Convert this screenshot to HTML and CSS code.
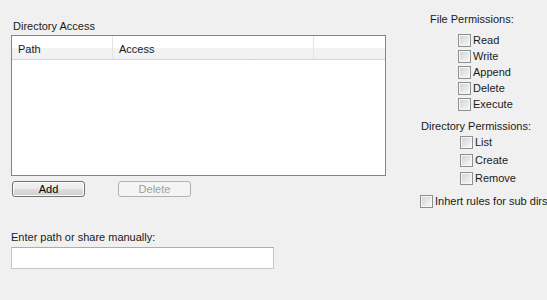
FILE: index.html
```html
<!DOCTYPE html>
<html>
<head>
<meta charset="utf-8">
<link rel="stylesheet" href="styles.css">
</head>
<body>
<div class="page">
  <section class="left">
    <div class="label title">Directory Access</div>
    <div class="list">
      <div class="head">
        <div class="col c1">Path</div>
        <div class="col c2">Access</div>
        <div class="col c3"></div>
      </div>
    </div>
    <div class="buttons">
      <button class="btn">Add</button>
      <button class="btn" disabled>Delete</button>
    </div>
    <div class="label manual">Enter path or share manually:</div>
    <input class="path" type="text">
  </section>
  <section class="right">
    <div class="label fp">File Permissions:</div>
    <div class="group g1">
      <label class="row"><input type="checkbox" class="cb"><span>Read</span></label>
      <label class="row"><input type="checkbox" class="cb"><span>Write</span></label>
      <label class="row"><input type="checkbox" class="cb"><span>Append</span></label>
      <label class="row"><input type="checkbox" class="cb"><span>Delete</span></label>
      <label class="row"><input type="checkbox" class="cb"><span>Execute</span></label>
    </div>
    <div class="label dp">Directory Permissions:</div>
    <div class="group g2">
      <label class="row"><input type="checkbox" class="cb"><span>List</span></label>
      <label class="row"><input type="checkbox" class="cb"><span>Create</span></label>
      <label class="row"><input type="checkbox" class="cb"><span>Remove</span></label>
    </div>
    <label class="row inherit"><input type="checkbox" class="cb"><span>Inhert rules for sub dirs</span></label>
  </section>
</div>
</body>
</html>
```
FILE: styles.css
```css
html, body {
  margin: 0;
  padding: 0;
  background: #f0f0f0;
  width: 547px;
  height: 300px;
  overflow: hidden;
}
body {
  font-family: "Liberation Sans", Arial, sans-serif;
  font-size: 11px;
  color: #1a1a1a;
}
.page {
  display: flex;
  align-items: flex-start;
}
.left {
  width: 375px;
  margin-left: 11px;
  padding-top: 19px;
  display: flex;
  flex-direction: column;
}
.label {
  line-height: 14px;
  height: 14px;
  white-space: nowrap;
}
.title { margin-left: 2px; margin-bottom: 2px; }
.list {
  width: 373px;
  height: 139px;
  border: 1px solid #848484;
  background: #fff;
}
.head {
  display: flex;
  height: 23px;
  border-bottom: 1px solid #d5d5d5;
  background: linear-gradient(#ffffff, #ffffff 50%, #f2f3f5 51%, #f1f2f4);
}
.col {
  line-height: 23px;
  padding-top: 2px;
  padding-left: 6px;
  box-sizing: border-box;
  border-right: 1px solid #e3e5e8;
}
.c1 { width: 101px; }
.c2 { width: 201px; }
.c3 { flex: 1; border-right: none; }
.buttons {
  display: flex;
  gap: 33px;
  margin-top: 5px;
  margin-left: 1px;
}
.btn {
  width: 73px;
  height: 16px;
  padding: 0;
  font: inherit;
  color: #000;
  border: 1px solid #707070;
  border-radius: 3px;
  background: linear-gradient(#f2f2f2, #ebebeb 50%, #dddddd 51%, #cfcfcf);
  box-shadow: inset 0 0 0 1px #fcfcfc;
  line-height: 13px;
}
.btn:disabled {
  color: #a0a0a0;
  border-color: #adb2b5;
  background: #f4f4f4;
  box-shadow: none;
}
.manual { margin-top: 33px; }
.path {
  margin-top: 3px;
  width: 263px;
  height: 22px;
  box-sizing: border-box;
  border: 1px solid #c6c6c6;
  border-top-color: #adadad;
  background: #fff;
  padding: 0;
  outline: none;
}
.right {
  margin-left: 33px;
  padding-top: 12px;
  display: flex;
  flex-direction: column;
  width: 128px;
}
.fp { margin-left: 11px; margin-bottom: 6px; }
.group { display: flex; flex-direction: column; }
.g1 { margin-left: 39px; }
.g1 .row { height: 16px; }
.dp { margin-left: 2px; margin-top: 8px; height: 13px; line-height: 12px; }
.g2 { margin-left: 41px; }
.g2 .row { height: 18px; }
.row {
  display: flex;
  align-items: center;
  gap: 2px;
  white-space: nowrap;
}
.inherit {
  margin-top: 7px;
  margin-left: 1px;
  height: 14px;
}
.cb {
  appearance: none;
  -webkit-appearance: none;
  margin: 0;
  width: 13px;
  height: 13px;
  flex: none;
  box-sizing: border-box;
  border: 1px solid #8e8f8f;
  background: linear-gradient(135deg, #cdd0d4, #eeeeee 70%, #f8f8f8);
  box-shadow: inset 0 0 0 1px #f6f6f6;
}
```
